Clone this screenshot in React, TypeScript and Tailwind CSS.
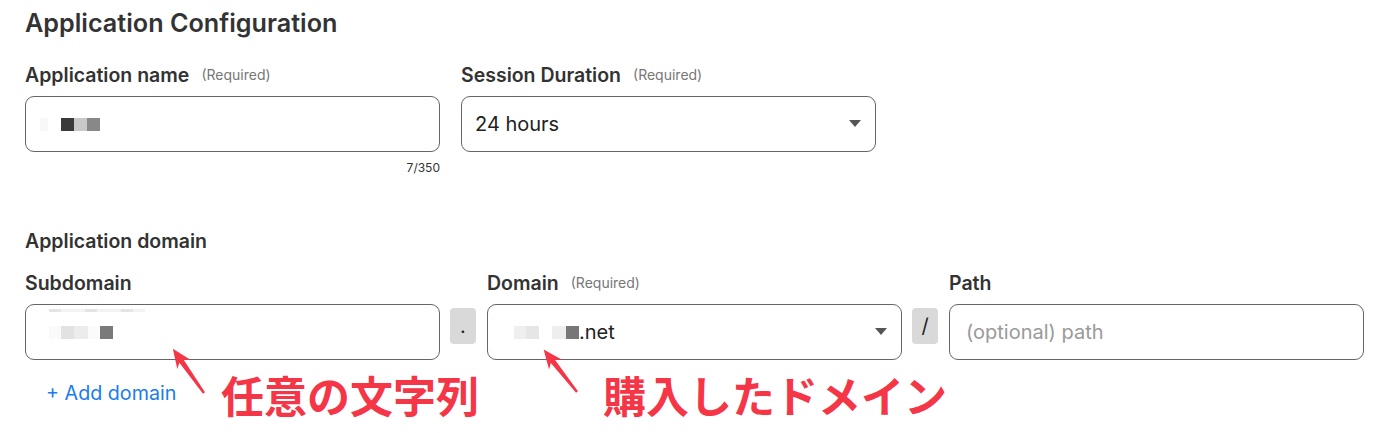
import type { ReactNode } from "react";

const font = { fontFamily: "Inter, 'Noto Sans', sans-serif" };

function Label({ text, required }: { text: string; required?: boolean }) {
  return (
    <div className="flex h-6 items-center gap-[12px]">
      <span className="text-[19.5px] font-semibold leading-6 text-[#333]">{text}</span>
      {required ? (
        <span className="text-[14px] leading-6 text-[#777]">(Required)</span>
      ) : null}
    </div>
  );
}

function Box({ children, select }: { children?: ReactNode; select?: boolean }) {
  return (
    <div className="relative mt-[9px] flex h-[56px] w-[415px] items-center rounded-[9px] border border-[#666] bg-white pl-[13px] pr-4">
      {children}
      {select ? (
        <svg
          className="absolute right-[14px] top-[23px]"
          width="12"
          height="7"
          viewBox="0 0 12 7"
        >
          <path d="M0 0h12L6 7z" fill="#555" />
        </svg>
      ) : null}
    </div>
  );
}

function Blocks({ cells }: { cells: [number, string][] }) {
  return (
    <div className="flex h-[13px]">
      {cells.map(([w, c], i) => (
        <div key={i} className="h-full" style={{ width: w, background: c }} />
      ))}
    </div>
  );
}

function Sep({ char }: { char: string }) {
  return (
    <div className="ml-[10px] mr-[11px] mt-[37px] flex h-9 w-[26px] items-center justify-center rounded-[4px] bg-[#d9d9d9] text-[20px] text-[#222]">
      {char}
    </div>
  );
}

function Arrow({ x, y, angle, len }: { x: number; y: number; angle: number; len: number }) {
  const L = len;
  const pts = `0,-1.2 ${L - 15},-2.6 ${L - 19},-8 ${L},0 ${L - 19},8 ${L - 15},2.6 0,1.2`;
  return <polygon points={pts} fill="#f43647" transform={`translate(${x} ${y}) rotate(${angle})`} />;
}

export default function App() {
  return (
    <div className="relative h-[433px] w-[1400px] overflow-hidden bg-white px-[25px] pt-[7px]" style={font}>
      <h2 className="text-[25.2px] font-semibold leading-8 text-[#333]">
        Application Configuration
      </h2>

      <div className="mt-[24px] flex gap-[21px]">
        <div className="w-[415px]">
          <Label text="Application name" required />
          <Box>
            <div className="ml-px">
              <Blocks
                cells={[
                  [8, "#f8f8f8"],
                  [13, "#fff"],
                  [13, "#3a3a3a"],
                  [13, "#c8c8c8"],
                  [13, "#888"],
                ]}
              />
            </div>
          </Box>
          <div className="mt-2 text-right text-[12px] leading-4 text-[#333]">7/350</div>
        </div>
        <div className="w-[415px]">
          <Label text="Session Duration" required />
          <Box select>
            <span className="text-[20px] text-[#222]">24 hours</span>
          </Box>
        </div>
      </div>

      <div className="mt-[53px] text-[19.5px] font-semibold leading-6 text-[#333]">
        Application domain
      </div>

      <div className="mt-[18px] flex items-start">
        <div>
          <Label text="Subdomain" />
          <Box>
            <div className="relative h-full w-full">
              <div className="absolute left-[10px] top-[4px] flex h-[3px]">
                <div className="w-[12px] bg-[#e4e4e4]" />
                <div className="w-[24px] bg-[#f3f3f3]" />
                <div className="w-[12px] bg-[#e4e4e4]" />
                <div className="w-[24px] bg-[#f3f3f3]" />
                <div className="w-[12px] bg-[#e4e4e4]" />
                <div className="w-[12px] bg-[#f3f3f3]" />
              </div>
              <div className="absolute left-[10px] top-[21px]">
                <Blocks
                  cells={[
                    [12, "#fafafa"],
                    [13, "#e2e2e2"],
                    [14, "#ececec"],
                    [12, "#fbfbfb"],
                    [13, "#7a7a7a"],
                  ]}
                />
              </div>
            </div>
          </Box>
        </div>
        <Sep char="." />
        <div>
          <Label text="Domain" required />
          <Box select>
            <div className="flex items-center pl-[13px]">
              <Blocks
                cells={[
                  [12, "#efefef"],
                  [13, "#e6e6e6"],
                  [13, "#fff"],
                  [14, "#eeeeee"],
                  [13, "#777"],
                ]}
              />
              <span className="text-[20px] text-[#222]">.net</span>
            </div>
          </Box>
        </div>
        <Sep char="/" />
        <div>
          <Label text="Path" />
          <Box>
            <span className="pl-[3px] text-[20px] text-[#9a9a9a]">(optional) path</span>
          </Box>
        </div>
      </div>

      <div className="mt-[21px] pl-[21px] text-[19.7px] leading-6 text-[#1a7cf0]">+ Add domain</div>

      <div
        className="absolute left-[221px] top-[366px] text-[43px] font-bold leading-[56px] text-[#f43647]"
        style={{ fontFamily: "'Noto Sans CJK JP', sans-serif" }}
      >
        任意の文字列
      </div>
      <div
        className="absolute left-[603px] top-[366px] text-[43px] font-bold leading-[56px] text-[#f43647]"
        style={{ fontFamily: "'Noto Sans CJK JP', sans-serif" }}
      >
        購入したドメイン
      </div>

      <svg className="pointer-events-none absolute left-0 top-0" width="1400" height="433">
        <Arrow x={204} y={393} angle={-125.2} len={54} />
        <Arrow x={577} y={392} angle={-128.2} len={54} />
      </svg>
    </div>
  );
}
